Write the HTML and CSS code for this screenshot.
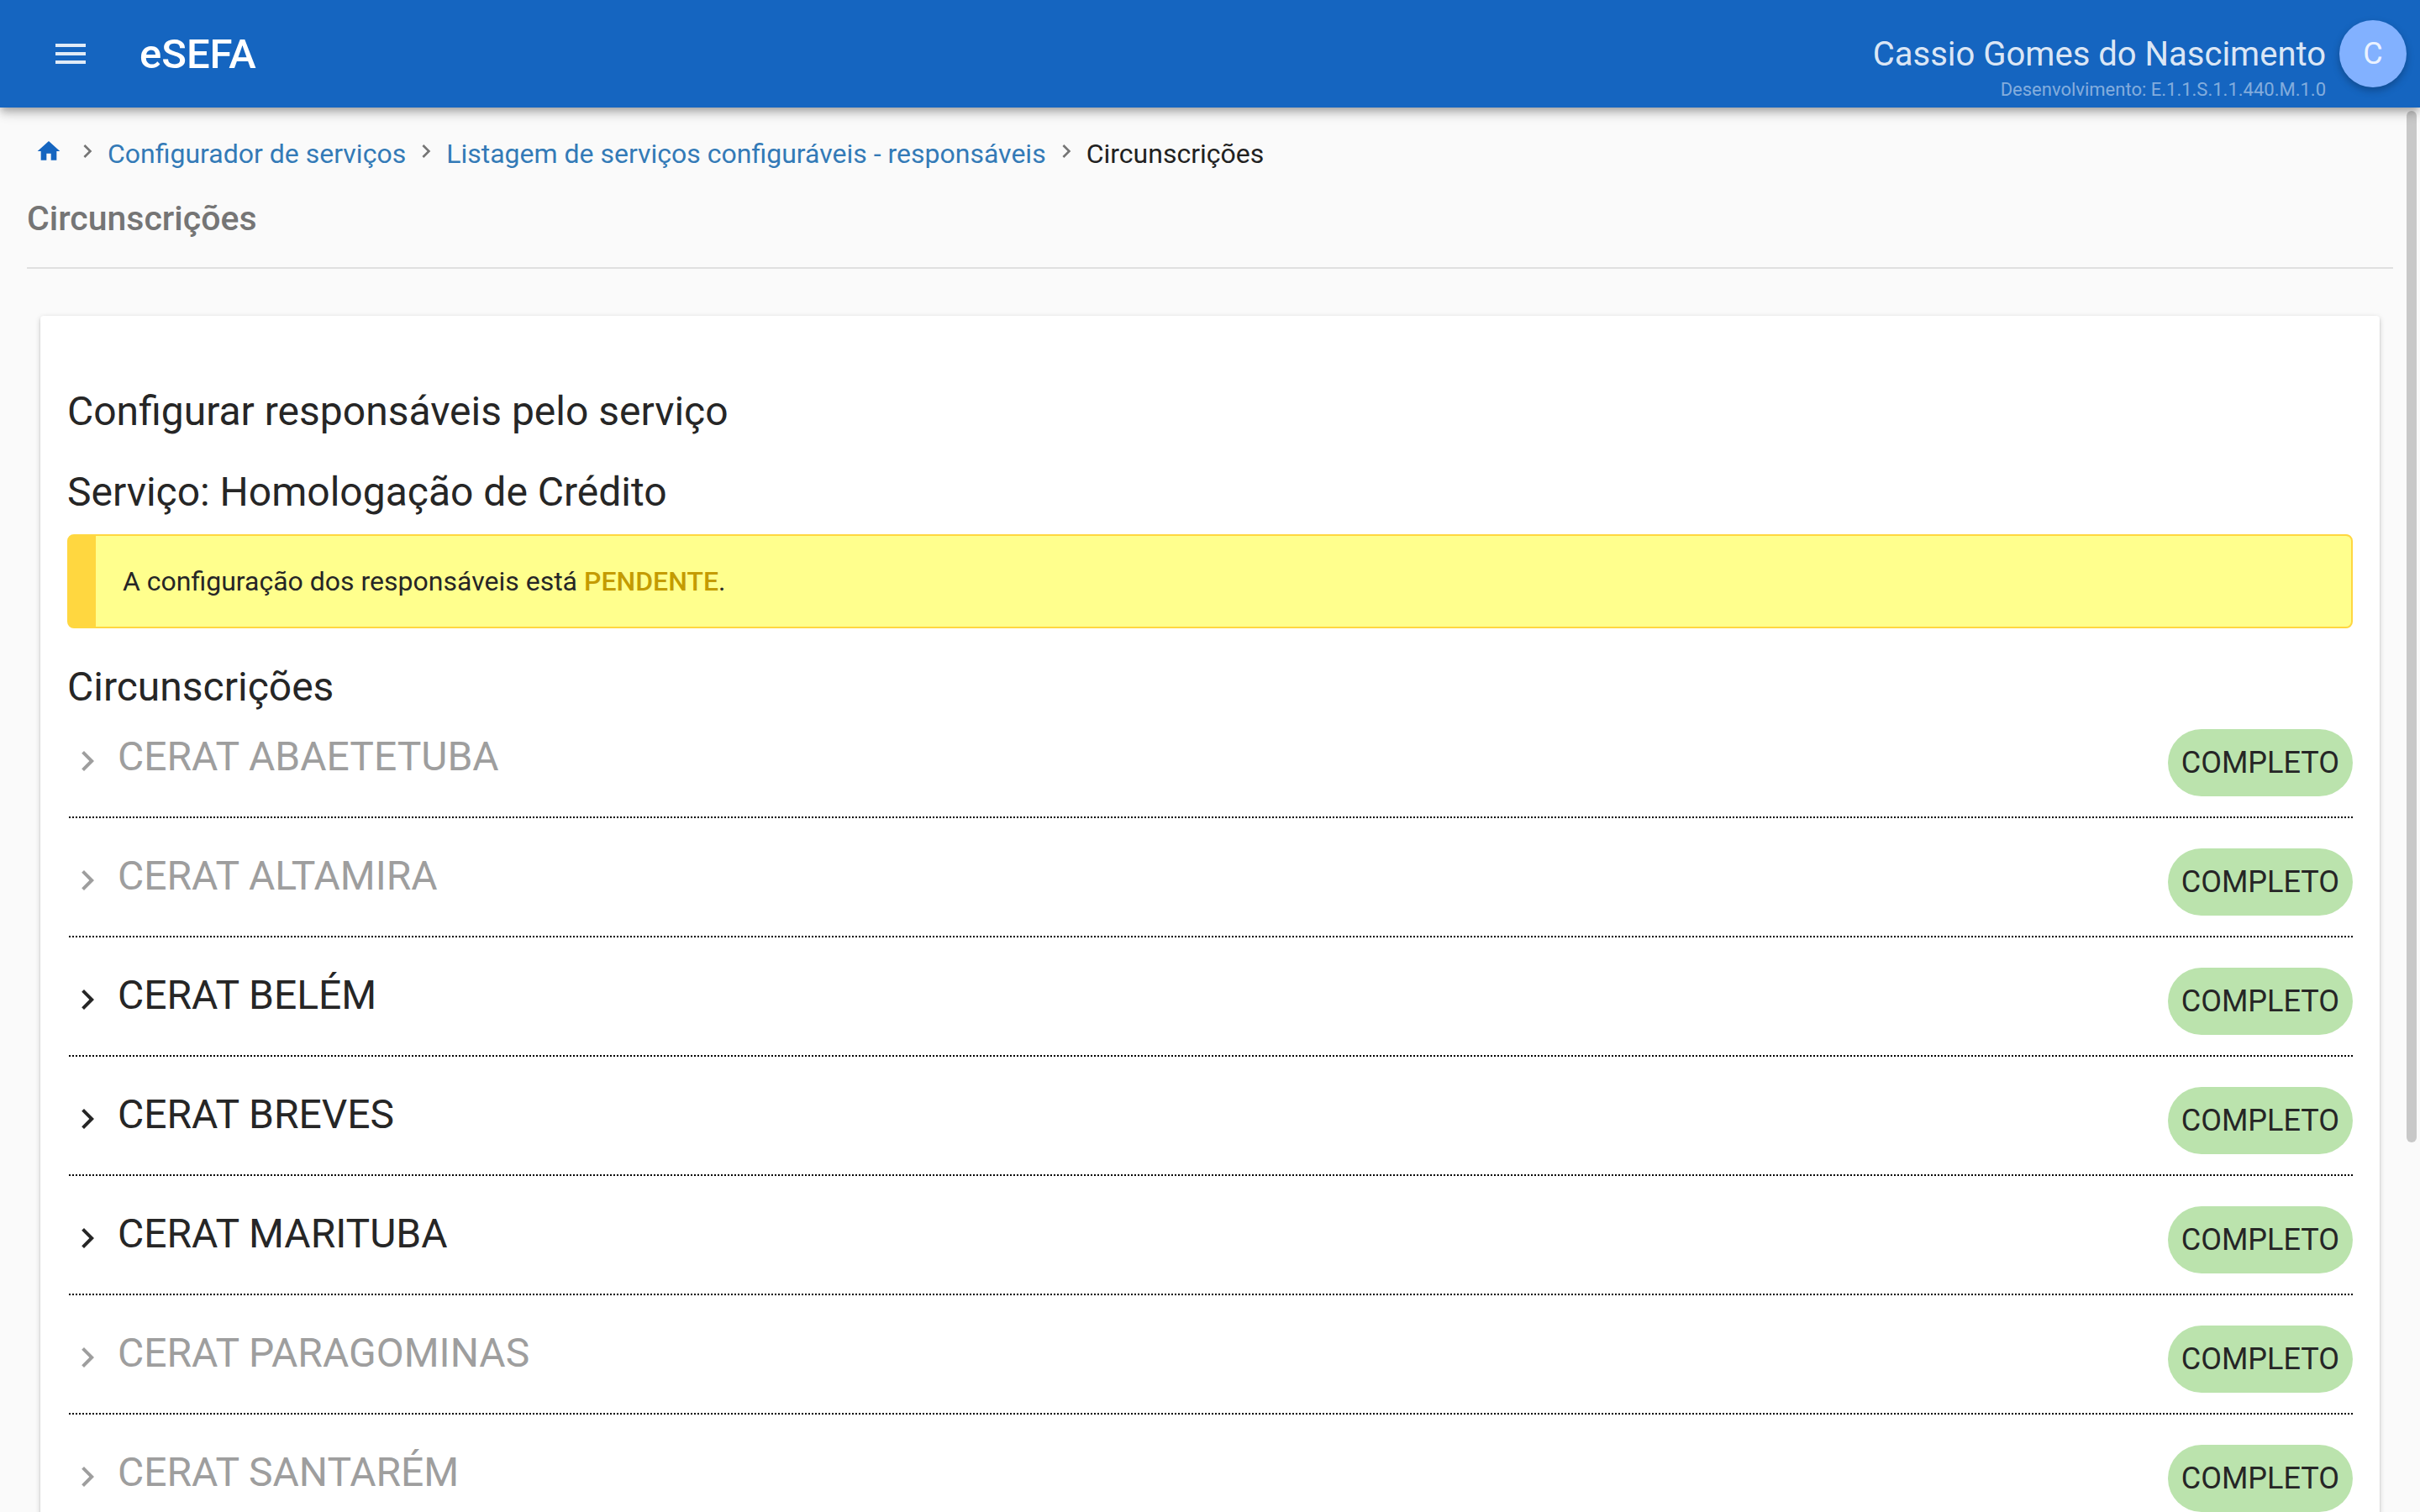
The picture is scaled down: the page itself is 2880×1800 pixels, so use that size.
FILE: index.html
```html
<!DOCTYPE html>
<html lang="pt-BR">
<head>
<meta charset="utf-8">
<title>eSEFA - Circunscrições</title>
<link rel="stylesheet" href="styles.css">
</head>
<body>
<svg class="sprite" aria-hidden="true">
  <symbol id="chevron" viewBox="0 0 24 24"><path d="M10 6 8.590 7.410 13.170 12l-4.580 4.590L10 18l6-6z"/></symbol>
</svg>

<header class="toolbar">
  <button class="menu-button" type="button" aria-label="Menu">
    <svg class="icon-large" viewBox="0 0 24 24"><path d="M3 18h18v-2H3v2zm0-5h18v-2H3v2zm0-7v2h18V6H3z"/></svg>
  </button>
  <span class="brand">eSEFA</span>
  <div class="user">
    <span class="user-name">Cassio Gomes do Nascimento</span>
    <span class="version">Desenvolvimento: E.1.1.S.1.1.440.M.1.0</span>
  </div>
  <button class="avatar" type="button" aria-label="Conta">C</button>
</header>

<main class="content">
  <nav class="breadcrumb" aria-label="Navegação">
    <a class="home" href="#" aria-label="Início"><svg class="icon-small" viewBox="0 0 24 24"><path d="M10 20v-6h4v6h5v-8h3L12 3 2 12h3v8z"/></svg></a>
    <svg class="icon-small separator"><use href="#chevron"/></svg>
    <a class="crumb" href="#">Configurador de serviços</a>
    <svg class="icon-small separator"><use href="#chevron"/></svg>
    <a class="crumb" href="#">Listagem de serviços configuráveis - responsáveis</a>
    <svg class="icon-small separator"><use href="#chevron"/></svg>
    <span class="crumb current">Circunscrições</span>
  </nav>
  <h1 class="page-title">Circunscrições</h1>

  <section class="card">
    <h2 class="heading">Configurar responsáveis pelo serviço</h2>
    <h2 class="heading">Serviço: Homologação de Crédito</h2>
    <p class="alert" role="status">A configuração dos responsáveis está <span class="pending">PENDENTE</span>.</p>
    <h2 class="heading list-heading">Circunscrições</h2>
    <ul class="list">
      <li class="row"><button class="expand" type="button" disabled><svg class="icon-large arrow"><use href="#chevron"/></svg><span>CERAT ABAETETUBA</span></button><span class="badge">COMPLETO</span></li>
      <li class="row"><button class="expand" type="button" disabled><svg class="icon-large arrow"><use href="#chevron"/></svg><span>CERAT ALTAMIRA</span></button><span class="badge">COMPLETO</span></li>
      <li class="row"><button class="expand" type="button"><svg class="icon-large arrow"><use href="#chevron"/></svg><span>CERAT BELÉM</span></button><span class="badge">COMPLETO</span></li>
      <li class="row"><button class="expand" type="button"><svg class="icon-large arrow"><use href="#chevron"/></svg><span>CERAT BREVES</span></button><span class="badge">COMPLETO</span></li>
      <li class="row"><button class="expand" type="button"><svg class="icon-large arrow"><use href="#chevron"/></svg><span>CERAT MARITUBA</span></button><span class="badge">COMPLETO</span></li>
      <li class="row"><button class="expand" type="button" disabled><svg class="icon-large arrow"><use href="#chevron"/></svg><span>CERAT PARAGOMINAS</span></button><span class="badge">COMPLETO</span></li>
      <li class="row"><button class="expand" type="button" disabled><svg class="icon-large arrow"><use href="#chevron"/></svg><span>CERAT SANTARÉM</span></button><span class="badge">COMPLETO</span></li>
    </ul>
  </section>
</main>
<div class="scroll-thumb" aria-hidden="true"></div>
</body>
</html>
```

FILE: styles.css
```css
* {
  box-sizing: border-box;
}

body {
  margin: 0;
  height: 100vh;
  overflow: hidden;
  display: flex;
  flex-direction: column;
  background: #fafafa;
  color: #262626;
  font-family: Roboto, "Liberation Sans", sans-serif;
  font-size: 32px;
  line-height: 40px;
}

button {
  border: 0;
  padding: 0;
  background: none;
  color: inherit;
  font: inherit;
}

h1,
h2,
p,
ul {
  margin: 0;
  padding: 0;
  font-weight: 400;
}

svg {
  display: block;
  flex: none;
  fill: currentColor;
}

.sprite {
  position: absolute;
  width: 0;
  height: 0;
}

.icon-small {
  width: 32px;
  height: 32px;
  margin-top: 4px;
}

.icon-large {
  width: 48px;
  height: 48px;
}

/* Top bar */
.toolbar {
  position: relative;
  z-index: 2;
  flex: none;
  display: flex;
  align-items: center;
  height: 128px;
  padding: 0 16px 0 60px;
  background: #1565c0;
  color: rgba(255, 255, 255, 0.87);
  box-shadow: 0 4px 8px -2px rgba(0, 0, 0, 0.2), 0 8px 10px rgba(0, 0, 0, 0.14), 0 2px 20px rgba(0, 0, 0, 0.12);
}

.brand {
  margin-left: 58px;
  padding-top: 2px;
  color: #fff;
  font-size: 49px;
  font-weight: 500;
}

.user {
  display: flex;
  flex-direction: column;
  margin-left: auto;
  padding-top: 38px;
  text-align: right;
}

.user-name {
  font-size: 40px;
  line-height: 48px;
}

.version {
  font-size: 22px;
  line-height: 36px;
  opacity: 0.55;
}

.avatar {
  width: 80px;
  height: 80px;
  margin-left: 16px;
  border-radius: 50%;
  background: #82b1ff;
  font-size: 36px;
  line-height: 80px;
  box-shadow: 0 4px 10px rgba(0, 0, 0, 0.26);
}

/* Page */
.content {
  flex: 1;
  min-height: 0;
  overflow: auto;
  scrollbar-width: none;
  padding: 32px 32px 0;
}

.breadcrumb {
  display: flex;
  align-items: flex-start;
  column-gap: 8px;
  padding-left: 10px;
}

.home {
  margin-right: 6px;
  color: #1565c0;
}

.separator {
  color: #757575;
}

.crumb {
  color: #337ab7;
  line-height: 46px;
  text-decoration: none;
}

.current {
  color: #212121;
}

.page-title {
  padding: 30px 0 34px;
  border-bottom: 2px solid #e0e0e0;
  color: #757575;
  font-size: 41px;
  line-height: 48px;
  font-weight: 500;
}

.card {
  margin: 56px 16px 32px;
  padding: 66px 32px 32px;
  border-radius: 4px;
  background: #fff;
  box-shadow: 0 2px 6px rgba(0, 0, 0, 0.2), 0 2px 2px rgba(0, 0, 0, 0.14), 0 4px 2px -2px rgba(0, 0, 0, 0.12);
}

.heading {
  font-size: 48px;
  line-height: 96px;
}

.alert {
  margin-top: 2px;
  padding: 34px 32px;
  border: 2px solid #ffd740;
  border-left-width: 34px;
  border-radius: 8px;
  background: #ffff8d;
}

.pending {
  color: #c49b00;
  font-weight: 500;
}

.list-heading {
  padding: 38px 0 18px;
  line-height: 64px;
}

.list {
  list-style: none;
}

.row {
  display: flex;
  align-items: flex-start;
  justify-content: space-between;
  margin-left: 2px;
  padding-bottom: 24px;
  border-bottom: 2px dotted #000;
}

.row + .row {
  margin-top: 36px;
}

.expand {
  display: flex;
  align-items: flex-start;
  padding-top: 9px;
  font-size: 48px;
  line-height: 48px;
}

.expand:disabled {
  color: #9e9e9e;
}

.arrow {
  margin: 5px 12px 0 -2px;
}

.badge {
  padding: 0 16px;
  border-radius: 40px;
  background: #bbe3ad;
  font-size: 36px;
  line-height: 80px;
}

/* Overlay scroll indicator */
.scroll-thumb {
  position: absolute;
  z-index: 1;
  top: 132px;
  right: 4px;
  width: 12px;
  height: 1228px;
  border-radius: 6px;
  background: #c8c8c8;
}
```
